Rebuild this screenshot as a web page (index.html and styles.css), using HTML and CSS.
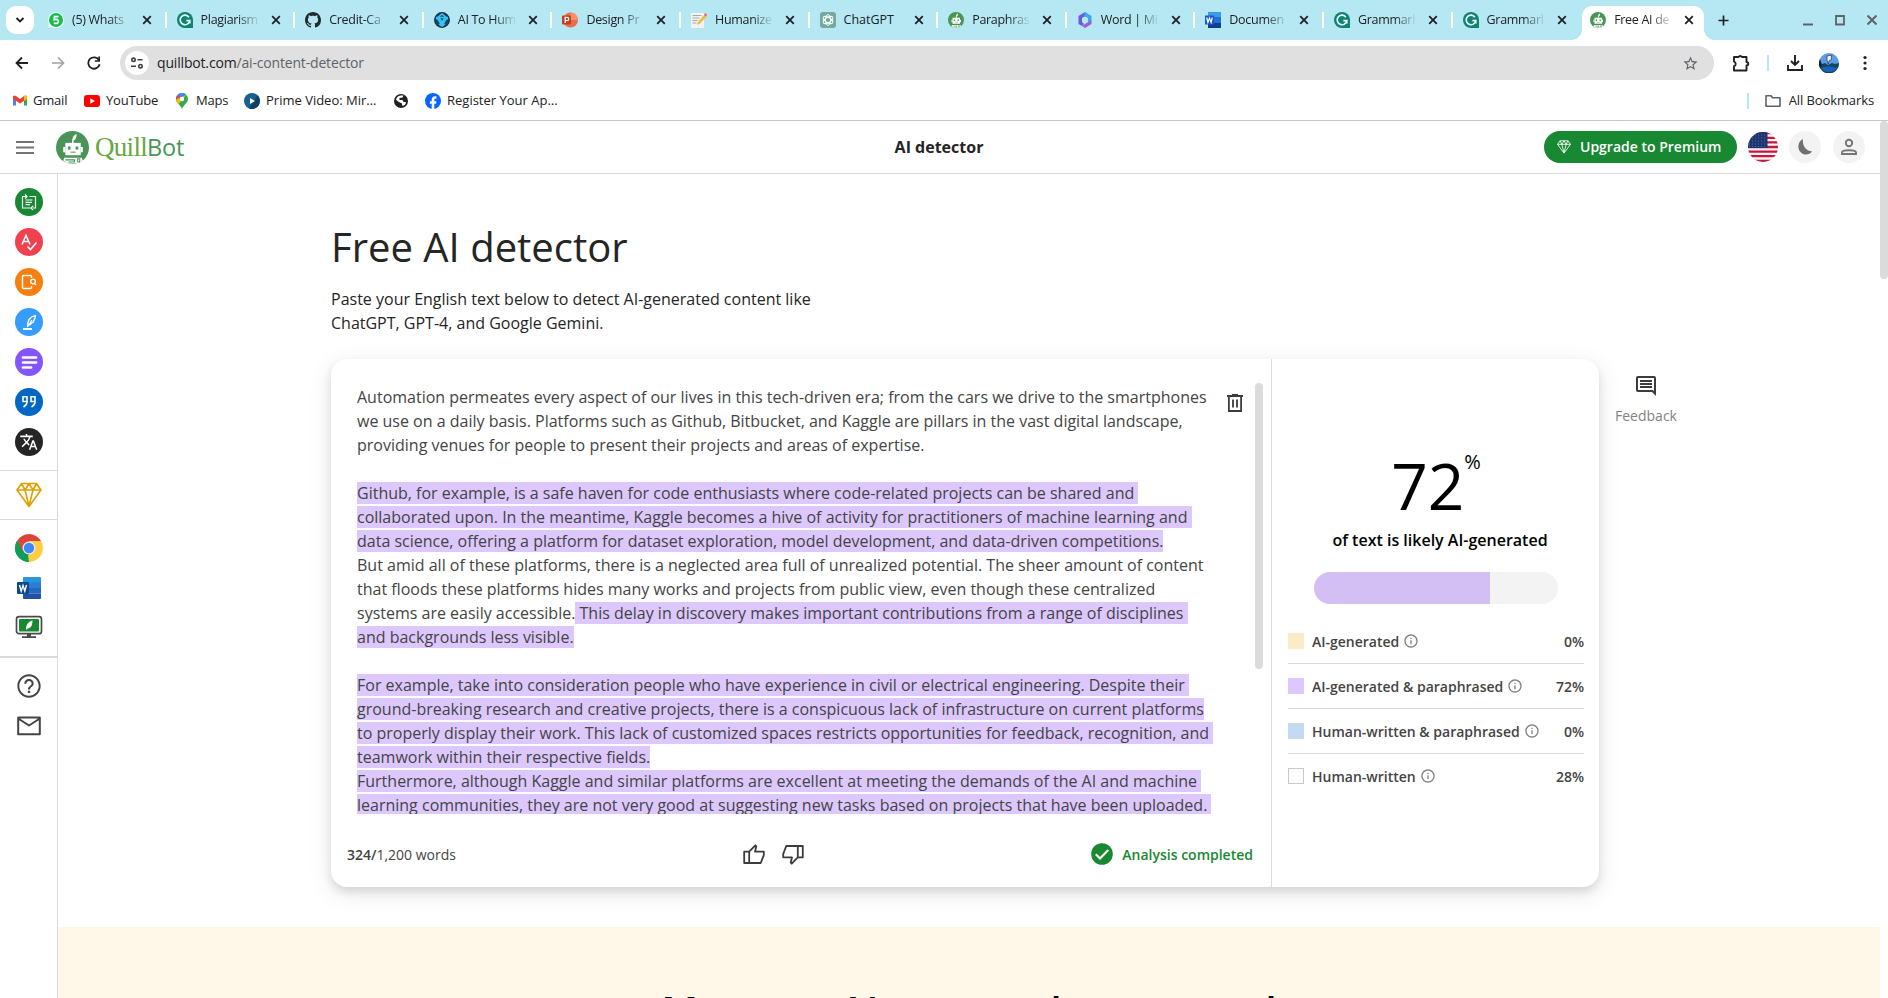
FILE: index.html
```
<!DOCTYPE html>
<html lang="en">
<head>
<meta charset="utf-8">
<title>Free AI detector</title>
<link rel="stylesheet" href="styles.css">
</head>
<body>
<svg class="defs" width="0" height="0">
  <defs>
    <symbol id="x" viewBox="0 0 10 10"><path d="M1.2 1.2l7.6 7.6M8.8 1.2L1.2 8.8" stroke="currentColor" stroke-width="1.8" fill="none"/></symbol>
    <symbol id="gram" viewBox="0 0 16 16"><path d="M8 0a8 8 0 0 1 8 8v8H8A8 8 0 0 1 8 0z" fill="#0a8571"/><path d="M12 5.2A4.8 4.8 0 1 0 12.8 8.6H9.4M12.8 8.6v3" fill="none" stroke="#fff" stroke-width="1.6"/></symbol>
    <symbol id="bot" viewBox="0 0 32 32"><circle cx="16" cy="16" r="16" fill="#499557"/><path d="M15.500 12c0-5 1.500-8 4.500-9 0 3-.5 5-3 6.500V12z" fill="#fff"/><path d="M9 11.500h15v12H9z" fill="#fff"/><path d="M7 15.500h2v5H7zM24 15.500h2v5h-2z" fill="#fff"/><rect x="11.500" y="15" width="2.600" height="3" fill="#499557"/><rect x="19" y="15" width="2.600" height="3" fill="#499557"/><path d="M14 20.500h5" stroke="#499557"/><path d="M8 26h17l1 2.500-4 3H11l-4-3z" fill="#fff"/><path d="M9 28h9v2h-6M21 27v3h2v-3z" fill="none" stroke="#499557"/></symbol>
    <symbol id="word" viewBox="0 0 24 22"><path d="M7 0h16a1 1 0 0 1 1 1v5H6V1a1 1 0 0 1 1-1z" fill="#2b95dc"/><path d="M6 5.500h18V11H6z" fill="#2b7cd3"/><path d="M6 11h18v5.500H6z" fill="#2866c6"/><path d="M6 16.500h18V21a1 1 0 0 1-1 1H7a1 1 0 0 1-1-1z" fill="#2150a5"/><rect y="5" width="12" height="12" rx="1" fill="#084a8f"/><path d="M2.500 8l1.700 6L6 8.500 7.800 14l1.700-6" fill="none" stroke="#fff" stroke-width="1.400"/></symbol>
    <symbol id="info" viewBox="0 0 24 24"><path fill="currentColor" d="M11 7h2v2h-2zm0 4h2v6h-2zm1-9C6.480 2 2 6.480 2 12s4.480 10 10 10 10-4.480 10-10S17.520 2 12 2zm0 18c-4.410 0-8-3.590-8-8s3.590-8 8-8 8 3.590 8 8-3.590 8-8 8z"/></symbol>
    <symbol id="gem" viewBox="0 0 26 26"><path d="M5.500 1.500h15L25 8 13 24.500 1 8zM1 8h24M5.500 1.500L9 8l4-6.500L17 8l3.500-6.500M9 8l4 16L17 8" fill="none" stroke="currentColor" stroke-width="1.600" stroke-linejoin="round"/></symbol>
    <symbol id="thumb" viewBox="0 0 22 20"><path d="M1.200 7.700h5V19h-5zM6.200 7.700L12.300 1.300l1 1-1.300 5.400h8.800v3.500L17.700 19H6.200" fill="none" stroke="currentColor" stroke-width="1.800" stroke-linejoin="round"/></symbol>
  </defs>
</svg>

<div class="tabs">
  <div class="tabsearch"><svg width="10" height="8" viewBox="0 0 10 8"><path d="M1.500 2L5 5.500 8.500 2" fill="none" stroke="#202124" stroke-width="1.900"/></svg></div>
  <div class="tab"><svg class="fav" viewBox="0 0 16 16"><path d="M0 16l1-4a8 8 0 1 1 3 3z" fill="#fff"/><circle cx="8" cy="8" r="7" fill="#14c04c"/><path d="M10.500 4.700H6.500l-.3 3c2-.8 4.400-.3 4.300 1.700s-2.800 2.600-4.600 1.500" fill="none" stroke="#fff" stroke-width="1.700"/></svg><span class="name">(5) Whats</span><svg class="close"><use href="#x"/></svg></div>
  <div class="tab"><svg class="fav"><use href="#gram"/></svg><span class="name">Plagiarism</span><svg class="close"><use href="#x"/></svg></div>
  <div class="tab"><svg class="fav" viewBox="0 0 16 16"><path fill="#24292f" d="M8 0C3.580 0 0 3.580 0 8c0 3.540 2.290 6.530 5.470 7.590.4.070.55-.17.55-.38 0-.19-.01-.82-.01-1.490-2.010.37-2.530-.49-2.690-.94-.09-.23-.48-.94-.82-1.130-.28-.15-.68-.52-.01-.53.63-.01 1.080.58 1.230.82.720 1.210 1.870.87 2.330.66.070-.52.28-.87.51-1.070-1.780-.2-3.640-.89-3.640-3.950 0-.87.31-1.590.82-2.150-.08-.2-.36-1.020.08-2.120 0 0 .67-.21 2.200.82.640-.18 1.320-.27 2-.27s1.360.09 2 .27c1.530-1.040 2.200-.82 2.200-.82.440 1.100.16 1.920.08 2.120.51.56.82 1.270.82 2.150 0 3.070-1.870 3.750-3.650 3.950.29.25.54.73.54 1.480 0 1.070-.01 1.930-.01 2.200 0 .21.15.46.55.38A8 8 0 0 0 16 8c0-4.420-3.580-8-8-8z"/></svg><span class="name">Credit-Ca</span><svg class="close"><use href="#x"/></svg></div>
  <div class="tab"><svg class="fav" viewBox="0 0 16 16"><circle cx="8" cy="8" r="7.300" fill="#174a70" stroke="#202b3c" stroke-width="1.300"/><path d="M3 5.500h10L8 13.500zM2 7l6-5 6 5M5 5.500l3 5 3-5M5 12l3 2 3-2" fill="none" stroke="#36c6f2" stroke-width="1.500"/></svg><span class="name">AI To Hum</span><svg class="close"><use href="#x"/></svg></div>
  <div class="tab"><svg class="fav" viewBox="0 0 16 16"><circle cx="8.500" cy="8" r="7.500" fill="#ed6c47"/><path d="M8.500.5a7.500 7.500 0 0 1 7.500 7.500H8.500z" fill="#ff8f6b"/><rect y="3.500" width="9" height="9" rx="1" fill="#c43e1c"/><path d="M3.200 11V5.300h1.900a1.600 1.600 0 0 1 0 3.300H3.200" fill="none" stroke="#fff" stroke-width="1.300"/></svg><span class="name">Design Pr</span><svg class="close"><use href="#x"/></svg></div>
  <div class="tab"><svg class="fav" viewBox="0 0 16 16"><path d="M0 1h13v15H0z" fill="#f3f3f3"/><path d="M1.500 3.500h9M1.500 6h7M1.500 8.500h5M1.500 11h4" stroke="#a7a7ad"/><path d="M6 13l1-3 7-8 2 2-7 7.500z" fill="#f6b73c"/><path d="M13 3l1.500-2L16 2.500 15 4.500z" fill="#df6f63"/></svg><span class="name">Humanize</span><svg class="close"><use href="#x"/></svg></div>
  <div class="tab"><svg class="fav" viewBox="0 0 16 16"><rect width="16" height="16" rx="3" fill="#74aa9c"/><g fill="none" stroke="#fff" stroke-width=".9"><ellipse cx="8" cy="8" rx="2.600" ry="5.400"/><ellipse cx="8" cy="8" rx="2.600" ry="5.400" transform="rotate(60 8 8)"/><ellipse cx="8" cy="8" rx="2.600" ry="5.400" transform="rotate(120 8 8)"/></g></svg><span class="name full">ChatGPT</span><svg class="close"><use href="#x"/></svg></div>
  <div class="tab"><svg class="fav"><use href="#bot"/></svg><span class="name">Paraphras</span><svg class="close"><use href="#x"/></svg></div>
  <div class="tab"><svg class="fav" viewBox="0 0 16 16"><path d="M8 0L1.500 4v8L5 14l2-2-2-2V6l5-3z" fill="#6b5bd6"/><path d="M8 0l6.500 4v5L11 10V6L7 4z" fill="#3ba8e8"/><path d="M5 14l3 2 6.500-4V8L8 12z" fill="#9b5fd8"/></svg><span class="name">Word | Mi</span><svg class="close"><use href="#x"/></svg></div>
  <div class="tab"><svg class="fav" viewBox="0 0 16 16"><path d="M3 0h13v5H3z" fill="#3a9de9"/><path d="M3 5h13v6H3z" fill="#2373d3"/><path d="M3 11h13v5H3z" fill="#103f91"/><path d="M0 3.500h9v9H0z" fill="#185abd"/><path d="M1.700 5.500l1.200 5 1.600-4.500 1.600 4.500 1.200-5" fill="none" stroke="#fff" stroke-width="1.200"/></svg><span class="name">Documen</span><svg class="close"><use href="#x"/></svg></div>
  <div class="tab"><svg class="fav"><use href="#gram"/></svg><span class="name">Grammarl</span><svg class="close"><use href="#x"/></svg></div>
  <div class="tab nosep"><svg class="fav"><use href="#gram"/></svg><span class="name">Grammarl</span><svg class="close"><use href="#x"/></svg></div>
  <div class="tab active"><svg class="fav"><use href="#bot"/></svg><span class="name">Free AI de</span><svg class="close"><use href="#x"/></svg></div>
  <svg class="plus" width="11" height="11" viewBox="0 0 11 11"><path d="M5.500.5v10M.5 5.500h10" stroke="#202124" stroke-width="1.700"/></svg>
  <div class="winctl">
    <svg width="12" height="12" viewBox="0 0 12 12"><path d="M1 10.500h10" stroke="currentColor" stroke-width="2"/></svg>
    <svg width="12" height="12" viewBox="0 0 12 12"><path d="M2 2h8v8.500H2z" fill="none" stroke="currentColor" stroke-width="1.800"/></svg>
    <svg width="12" height="12" viewBox="0 0 12 12"><path d="M1.500 1.500l9 9M10.500 1.500l-9 9" stroke="currentColor" stroke-width="2"/></svg>
  </div>
</div>

<div class="toolbar">
  <div class="nav">
    <svg width="14" height="14" viewBox="0 0 14 14"><path d="M13 7H2M7 1.500L1.500 7 7 12.500" fill="none" stroke="#202124" stroke-width="1.800"/></svg>
    <svg width="14" height="14" viewBox="0 0 14 14"><path d="M1 7h11M7 1.500L12.500 7 7 12.500" fill="none" stroke="#a3a3a3" stroke-width="1.700"/></svg>
    <svg width="14" height="14" viewBox="0 0 14 14"><path d="M12 4.200A5.700 5.700 0 1 0 12.600 8.200" fill="none" stroke="#202124" stroke-width="1.800"/><path d="M13 .5v5.300H7.800V4.300h3.500V.5z" fill="#202124"/></svg>
  </div>
  <div class="omni">
    <span class="site"><svg width="14" height="12" viewBox="0 0 14 12"><g fill="none" stroke="#3c4043" stroke-width="1.600"><circle cx="3.500" cy="2.800" r="1.700"/><path d="M7.500 2.800h5M1 9.200h5"/><circle cx="10.500" cy="9.200" r="1.700"/></g></svg></span>
    <span class="url">quillbot.com<span>/ai-content-detector</span></span>
    <svg class="star" width="17" height="17" viewBox="0 0 24 24"><path fill="#606367" d="M22 9.240l-7.190-.62L12 2 9.190 8.630 2 9.240l5.460 4.730L5.820 21 12 17.270 18.180 21l-1.630-7.030L22 9.240zM12 15.400l-3.760 2.270 1-4.280-3.320-2.880 4.380-.38L12 6.100l1.710 4.040 4.380.38-3.320 2.880 1 4.280L12 15.400z"/></svg>
  </div>
  <div class="tools">
    <svg width="18" height="18" viewBox="0 0 18 18"><path d="M2 3h4.500a2 2 0 0 1 3.500 0h4.500v5a1.500 1.500 0 0 1 0 3.500v5H2v-4.300a2.400 2.400 0 0 0 0-4.600z" fill="none" stroke="#202124" stroke-width="1.900" stroke-linejoin="round"/></svg>
    <i></i>
    <svg width="16" height="16" viewBox="0 0 16 16"><path d="M8 0v9.500M4 6l4 4 4-4M1 10v5h14v-5" fill="none" stroke="#202124" stroke-width="1.900"/></svg>
    <svg width="20" height="20" viewBox="0 0 20 20"><circle cx="10" cy="10" r="10" fill="#5c9be8"/><path d="M0 11l3 0 3-1 3 2 4-2 3 1 4-1a10 10 0 0 1-20 1z" fill="#0e4a58"/><path d="M2 15c4-2 12-2 16 0a10 10 0 0 1-16 0z" fill="#1c5fc0"/><path d="M1 6a10 10 0 0 0 0 9l2-3z" fill="#17202a"/><path d="M8 3l5-1-1 3 1 1-3 2-1 3-1-4z" fill="#eef3fa" stroke="#2a3140" stroke-width=".7"/></svg>
    <svg width="4" height="16" viewBox="0 0 4 16"><g fill="#202124"><circle cx="2" cy="2.500" r="1.600"/><circle cx="2" cy="8" r="1.600"/><circle cx="2" cy="13.500" r="1.600"/></g></svg>
  </div>
</div>

<div class="bookmarks">
  <div class="bm gmail"><svg width="14" height="11" viewBox="0 0 14 11"><path d="M0 1v9.500h3V4z" fill="#4285f4"/><path d="M14 1v9.500h-3V4z" fill="#34a853"/><path d="M0 1.500Q1 0 3 1l4 3 4-3q2-1 3 .5V4L7 8.500 0 4z" fill="#ea4335"/><path d="M11 1q2-1 3 .5V4l-3 2z" fill="#fbbc04"/></svg><span>Gmail</span></div>
  <div class="bm yt"><svg width="16" height="12" viewBox="0 0 16 12"><rect width="16" height="12" rx="3" fill="#f00"/><path d="M6.300 3.300v5.400L11 6z" fill="#fff"/></svg><span>YouTube</span></div>
  <div class="bm maps"><svg width="12" height="16" viewBox="0 0 12 16"><path d="M6 0a6 6 0 0 1 6 6c0 4-4 5-6 10C4 11 0 10 0 6a6 6 0 0 1 6-6z" fill="#34a853"/><path d="M1 9L9.500.9A6 6 0 0 0 1.300 2.300L0 6z" fill="#4285f4"/><path d="M1.300 2.300A6 6 0 0 0 0 6l5-1z" fill="#ea4335"/><path d="M0 6.500q.2 2 2.500 4.500L10 2 6 4z" fill="#fbbc04"/><circle cx="6" cy="6" r="2.200" fill="#fff"/></svg><span>Maps</span></div>
  <div class="bm prime"><svg width="16" height="16" viewBox="0 0 16 16"><circle cx="8" cy="8" r="8" fill="#185f92"/><path d="M13.600 2.300A8 8 0 0 1 5 15.400z" fill="#123f66"/><path d="M6 5v6l5-3z" fill="#fff"/></svg><span>Prime Video: Mir…</span></div>
  <div class="bm globe"><svg width="14" height="14" viewBox="0 0 14 14"><circle cx="7" cy="7" r="7" fill="#202124"/><path d="M6.500 1.500h3l-1 2-3 .5v2h3l1 2h2.500q0 2-2 3.500H8V9.500L4 7.500 2 5.500Q3 2 6.500 1.500z" fill="#fff"/></svg></div>
  <div class="bm fb"><svg width="16" height="16" viewBox="0 0 16 16"><circle cx="8" cy="8" r="8" fill="#0866ff"/><path d="M6.700 15.900v-5.200H4.900V8.200h1.800V7c0-2.600 1.400-3.700 3.300-3.700.8 0 1.200.1 1.500.2v2.200h-1c-.9 0-1.200.5-1.200 1.300v1.200h2.200l-.4 2.500H9.300v5.200z" fill="#fff"/></svg><span>Register Your Ap…</span></div>
  <div class="allbm"><i></i><svg width="16" height="14" viewBox="0 0 16 14"><path d="M1 1.800h5l1.500 2H15v8.500H1z" fill="none" stroke="#5f6368" stroke-width="1.600" stroke-linejoin="round"/></svg><span>All Bookmarks</span></div>
</div>

<div class="page">
  <div class="main">
    <header class="top">
      <svg class="burger" width="18" height="13" viewBox="0 0 18 13"><path d="M0 1h18M0 6.500h18M0 12h18" stroke="#757575" stroke-width="2"/></svg>
      <div class="brand"><svg width="33" height="33"><use href="#bot"/></svg><span class="logo"><span>Quill</span><b>Bot</b></span></div>
      <div class="title">AI detector</div>
      <div class="actions">
        <div class="upgrade"><svg width="14" height="14"><use href="#gem"/></svg><span>Upgrade to Premium</span></div>
        <svg class="flag" width="30" height="30" viewBox="0 0 30 30"><clipPath id="fc"><circle cx="15" cy="15" r="15"/></clipPath><g clip-path="url(#fc)"><path d="M0 0h30v30H0z" fill="#f5f3f4"/><path d="M0 1.200h30M0 5.800h30M0 10.400h30M0 15h30M0 19.600h30M0 24.200h30M0 28.800h30" stroke="#c8163c" stroke-width="2.300"/><path d="M0 0h19.500v16H0z" fill="#1e3570"/><path d="M1 3h18M1 6h18M1 9h18M1 12h18M1 14.500h18" stroke="#50669b" stroke-width="1" stroke-dasharray="1 2"/></g></svg>
        <span class="round"><svg width="20" height="20" viewBox="0 0 20 20"><path d="M8 2C2.500 4.500 1.800 12.500 6.500 16c3.500 2.600 8.500 1.700 10.500-1.800C11 14.200 7 8.500 8 2z" fill="#707070"/></svg></span>
        <span class="round"><svg width="24" height="24" viewBox="0 0 24 24"><g fill="none" stroke="#757575" stroke-width="1.900"><circle cx="12" cy="8" r="3.200"/><path d="M5 19v-1.500c0-3 14-3 14 0V19z"/></g></svg></span>
      </div>
    </header>
    <div class="body">
      <aside class="side">
        <div class="group tools7">
          <span class="dot green"><svg viewBox="0 0 28 28"><path d="M12 8.500H7.500V20h8.500M10 6.500l2 2-2 2M14.500 8.500h6V20h-2.500M18 22l-2-2 2-2" fill="none" stroke="#fff" stroke-width="1.200"/><path d="M10.500 12h7M10.500 14.300h6.500M10.500 16.600h4.500" stroke="#fff" stroke-width="1.200"/></svg></span>
          <span class="dot red"><svg viewBox="0 0 28 28"><path d="M7 16.500L11 7.500l4 9M8.300 13.500h5.500M12.500 18.500l3 3 6-7" fill="none" stroke="#fff" stroke-width="1.600"/></svg></span>
          <span class="dot orange"><svg viewBox="0 0 28 28"><path d="M16.500 10V8.500q0-1-1-1H8.500q-1 0-1 1v11q0 1 1 1h7q1 0 1-1V18" fill="none" stroke="#fff" stroke-width="1.400"/><circle cx="18" cy="13.500" r="2.300" fill="none" stroke="#fff" stroke-width="1.300"/><path d="M19.500 15.500l1.500 1.500" stroke="#fff" stroke-width="1.300"/></svg></span>
          <span class="dot blue"><svg viewBox="0 0 28 28"><path d="M12.500 18.500c0-6 3-10 8-10.800-.2 2-.7 3.500-1.700 4.600l-.3 1.500-1.500 1c-1.500 2-3 2.300-4 2.300M12.500 19l4.500-7" fill="none" stroke="#fff" stroke-width="1.300"/><path d="M8 21h9" stroke="#fff" stroke-width="1.900"/></svg></span>
          <span class="dot purple"><svg viewBox="0 0 28 28"><path d="M8 9.500h13M8 14.500h13M8 19.500h8" stroke="#fff" stroke-width="2.700" stroke-linecap="round"/></svg></span>
          <span class="dot navy"><svg viewBox="0 0 28 28"><path d="M12 13.500H8V8.700h4v5.500q0 2.500-3.500 4.800M20 13.500h-4V8.700h4v5.500q0 2.500-3.500 4.800" fill="none" stroke="#fff" stroke-width="1.600"/></svg></span>
          <span class="dot black"><svg viewBox="0 0 28 28"><g transform="translate(4.500 4.500) scale(.78)"><path fill="#fff" d="M12.870 15.070l-2.540-2.510.03-.03c1.740-1.940 2.980-4.170 3.710-6.530H17V4h-7V2H8v2H1v1.990h11.170C11.500 7.920 10.440 9.750 9 11.350 8.070 10.320 7.300 9.190 6.690 8h-2c.73 1.630 1.730 3.170 2.980 4.560l-5.090 5.020L4 19l5-5 3.110 3.110.76-2.040zM18.500 10h-2L12 22h2l1.120-3h4.750L21 22h2l-4.500-12zm-2.620 7l1.620-4.330L19.120 17h-3.240z"/></g></svg></span>
        </div>
        <div class="group gold"><svg width="26" height="26"><use href="#gem"/></svg></div>
        <div class="group apps">
          <svg width="28" height="28" viewBox="0 0 28 28"><path d="M14 14L1.900 7A14 14 0 0 1 26.100 7z" fill="#db4437"/><path d="M14 14L1.900 7A14 14 0 0 0 14 28z" fill="#0f9d58"/><path d="M14 28A14 14 0 0 0 26.100 7H14v7z" fill="#ffcd40"/><path d="M14 7h12.100q.5.800 0 0M1.900 7L8 17.500 14 14z" fill="#db4437"/><path d="M1.900 7L8 17.500l6 3.500 0 7A14 14 0 0 1 1.900 7z" fill="#0f9d58"/><path d="M20 17.500L14 28l-1-7z" fill="#ffcd40"/><circle cx="14" cy="14" r="6.500" fill="#e8e8ee"/><circle cx="14" cy="14" r="5.200" fill="#4285f4"/></svg>
          <svg width="24" height="22"><use href="#word"/></svg>
          <svg width="28" height="24" viewBox="0 0 28 24"><rect x="1.500" y="1.700" width="25" height="17" rx="2.500" fill="#fff" stroke="#4a4a4a" stroke-width="1.700"/><rect x="4" y="4" width="20" height="12.500" rx="1" fill="#188832"/><path d="M11 15c0-5 2-8.500 6.500-9.500 0 5-2 8-5 8z" fill="#fff"/><path d="M12 19h4v2.300h5V23H7v-1.700h5z" fill="#4a4a4a"/></svg>
        </div>
        <div class="group help">
          <svg width="28" height="28" viewBox="0 0 24 24"><path fill="#444" d="M11 18h2v-2h-2v2zm1-16C6.480 2 2 6.480 2 12s4.480 10 10 10 10-4.480 10-10S17.520 2 12 2zm0 18.300c-4.600 0-8.300-3.700-8.300-8.300s3.700-8.300 8.300-8.300 8.300 3.700 8.300 8.300-3.700 8.300-8.300 8.300zm0-14.300c-2.210 0-4 1.790-4 4h1.800c0-1.200 1-2.200 2.200-2.200s2.200 1 2.200 2.200c0 2-3.100 1.750-3.100 5h1.800c0-2.250 3.100-2.500 3.100-5 0-2.210-1.790-4-4-4z"/></svg>
          <svg width="24" height="20" viewBox="0 0 24 20"><path d="M1.200 1.500h21.600v16.700H1.200zM1.200 2.500L12 9.500l10.800-7" fill="none" stroke="#444" stroke-width="2" stroke-linejoin="round"/></svg>
        </div>
      </aside>
      <div class="content">
        <div class="hero">
          <h1>Free AI detector</h1>
          <p>Paste your English text below to detect AI-generated content like<br>ChatGPT, GPT-4, and Google Gemini.</p>
          <div class="row">
            <div class="card">
              <div class="editor">
                <div class="scroll">
                  <div class="text">Automation permeates every aspect of our lives in this tech-driven era; from the cars we drive to the smartphones<br>we use on a daily basis. Platforms such as Github, Bitbucket, and Kaggle are pillars in the vast digital landscape,<br>providing venues for people to present their projects and areas of expertise.<br><br><mark>Github, for example, is a safe haven for code enthusiasts where code-related projects can be shared and&nbsp;<br>collaborated upon. In the meantime, Kaggle becomes a hive of activity for practitioners of machine learning and&nbsp;<br>data science, offering a platform for dataset exploration, model development, and data-driven competitions.</mark><br>But amid all of these platforms, there is a neglected area full of unrealized potential. The sheer amount of content<br>that floods these platforms hides many works and projects from public view, even though these centralized<br>systems are easily accessible.<mark> This delay in discovery makes important contributions from a range of disciplines&nbsp;<br>and backgrounds less visible.</mark><br><br><mark>For example, take into consideration people who have experience in civil or electrical engineering. Despite their&nbsp;<br>ground-breaking research and creative projects, there is a conspicuous lack of infrastructure on current platforms<br>to properly display their work. This lack of customized spaces restricts opportunities for feedback, recognition, and&nbsp;<br>teamwork within their respective fields.</mark><br><mark>Furthermore, although Kaggle and similar platforms are excellent at meeting the demands of the AI and machine&nbsp;<br>learning communities, they are not very good at suggesting new tasks based on projects that have been uploaded.&nbsp;</mark></div>
                  <svg class="trash" width="16" height="18" viewBox="0 0 16 18"><path d="M0 2h16M5 1h6M1.900 2v15h12.200V2M6 5.500v8M10 5.500v8" fill="none" stroke="#3c3c3c" stroke-width="1.800"/></svg>
                  <div class="thumbbar"></div>
                </div>
                <div class="foot">
                  <div class="words"><b>324/</b>1,200 words</div>
                  <div class="votes"><svg width="22" height="20"><use href="#thumb"/></svg><svg class="down" width="22" height="20"><use href="#thumb"/></svg></div>
                  <div class="done"><svg width="22" height="22" viewBox="0 0 22 22"><circle cx="11" cy="11" r="10.800" fill="#188832"/><path d="M4.800 11.300l4.200 4.200 8.300-8.600" fill="none" stroke="#fff" stroke-width="2.200"/></svg><span>Analysis completed</span></div>
                </div>
              </div>
              <div class="result">
                <div class="score"><span>72</span><sup>%</sup></div>
                <div class="caption">of text is likely AI-generated</div>
                <div class="bar"><div style="width:72%"></div></div>
                <div class="legend">
                  <div class="li"><i class="sw ai"></i><span>AI-generated</span><svg><use href="#info"/></svg><b>0%</b></div>
                  <div class="li"><i class="sw aip"></i><span>AI-generated &amp; paraphrased</span><svg><use href="#info"/></svg><b>72%</b></div>
                  <div class="li"><i class="sw hp"></i><span>Human-written &amp; paraphrased</span><svg><use href="#info"/></svg><b>0%</b></div>
                  <div class="li"><i class="sw hw"></i><span>Human-written</span><svg><use href="#info"/></svg><b>28%</b></div>
                </div>
              </div>
            </div>
            <div class="feedback"><svg width="24" height="24" viewBox="0 0 24 24"><path fill="#3c3c3c" d="M21.990 4c0-1.100-.89-2-1.990-2H4c-1.100 0-2 .9-2 2v12c0 1.100.9 2 2 2h14l4 4-.01-18zM20 4v13.170L18.830 16H4V4h16zM6 12h12v2H6zm0-3h12v2H6zm0-3h12v2H6z"/></svg><span>Feedback</span></div>
          </div>
        </div>
        <section class="promo"><h2>Meet our AI-powered<span> essay tool</span></h2></section>
      </div>
    </div>
  </div>
  <div class="pagebar"><div></div></div>
</div>
</body>
</html>
```

FILE: styles.css
```
* { box-sizing: border-box; }
html, body { margin: 0; height: 998px; overflow: hidden; }
body { background: #fff; font-family: "Open Sans", "Noto Sans", sans-serif; color: #252525; display: flex; flex-direction: column; }
svg { display: block; flex: none; }
.defs { position: absolute; }
i { display: block; flex: none; }

/* browser chrome */
.tabs { flex: none; height: 40px; background: #b5e8f3; display: flex; align-items: center; font-size: 12.500px; color: #202124; padding-left: 6px; }
.tabsearch { width: 28px; height: 28px; border-radius: 10px; background: #fff; display: flex; align-items: center; justify-content: center; margin-right: 6px; }
.tab { flex: none; width: 126.6px; height: 16px; display: flex; align-items: center; padding-left: 8px; border-right: 2px solid #fff; margin-right: 2px; }
.tab.nosep { border-color: transparent; }
.fav { width: 16px; height: 16px; }
.name { width: 60px; margin-left: 8px; white-space: nowrap; line-height: 20px; letter-spacing: -.3px; -webkit-mask-image: linear-gradient(90deg, #000 60%, transparent 98%); mask-image: linear-gradient(90deg, #000 60%, transparent 98%); }
.name.full { -webkit-mask-image: none; mask-image: none; letter-spacing: 0; }
.close { width: 10px; height: 10px; margin-left: 10px; }
.active { position: relative; width: 122px; height: 34px; align-self: flex-end; margin-left: -1px; padding-bottom: 6px; margin-right: 0; background: #fff; border: 0; border-radius: 10px 10px 0 0; }
.active::before, .active::after { content: ""; position: absolute; bottom: 0; width: 10px; height: 10px; }
.active::before { left: -10px; background: radial-gradient(circle at 0 0, #b5e8f3 9.5px, #fff 10px); }
.active::after { right: -10px; background: radial-gradient(circle at 100% 0, #b5e8f3 9.500px, #fff 10px); }
.plus { margin-left: 14px; }
.winctl { margin-left: auto; display: flex; gap: 20px; padding-right: 10px; color: #5f6368; }
.toolbar { flex: none; height: 46px; display: flex; align-items: center; padding-left: 15px; }
.nav { display: flex; gap: 22px; width: 105px; }
.omni { width: 1594px; height: 34px; border-radius: 17px; background: #e0e0e0; display: flex; align-items: center; padding: 0 15px 0 5px; }
.site { width: 24px; height: 24px; border-radius: 50%; background: #fff; display: flex; align-items: center; justify-content: center; }
.url { font-size: 14px; margin-left: 8px; padding-bottom: 2px; color: #202124; letter-spacing: -.17px; }
.url span { color: #606367; }
.star { margin-left: auto; }
.tools { display: flex; align-items: center; margin-left: 18px; }
.tools i, .allbm i { width: 2px; height: 16px; background: #b5e8f3; }
.tools i { margin: 0 18px 0 17px; }
.tools svg:nth-of-type(3) { margin: 0 24px 0 16px; }
.bookmarks { flex: none; height: 35px; border-bottom: 1px solid #c8c8c8; padding: 0 14px 5px 13px; display: flex; align-items: center; font-size: 13px; color: #202124; white-space: nowrap; }
.bookmarks span { padding-bottom: 2px; }
.bm { display: flex; align-items: center; gap: 6px; flex: none; height: 28px; }
.gmail { width: 71px; letter-spacing: -.2px; }
.yt { width: 92px; letter-spacing: -.2px; }
.maps { width: 68px; gap: 8px; letter-spacing: -.2px; }
.prime { width: 150px; }
.globe { width: 31px; }
.allbm { margin-left: auto; display: flex; align-items: center; letter-spacing: -.1px; }
.allbm svg { margin: 0 8px 0 16px; }

/* site */
.page { flex: 1; display: flex; min-height: 0; }
.main { flex: 1; display: flex; flex-direction: column; min-width: 0; }
.pagebar { width: 8px; }
.pagebar div { height: 158px; border-radius: 4px; background: #dbdbdb; }
.top { flex: none; height: 53px; border-bottom: 1px solid #dadada; display: grid; grid-template-columns: 40px 1fr auto 1fr; align-items: center; padding: 0 15px 0 16px; }
.brand { display: flex; align-items: center; gap: 6px; }
.logo { font-size: 23.500px; line-height: 30px; color: #67a83f; display: flex; }
.logo span { font-family: "Liberation Serif", serif; font-size: 27px; letter-spacing: -.7px; }
.logo b { font-weight: 400; color: #499557; letter-spacing: -.2px; }
.title { font-size: 16px; font-weight: 700; margin-right: 43px; }
.actions { display: flex; align-items: center; justify-content: flex-end; }
.upgrade { width: 193px; height: 32px; border-radius: 16px; background: #188832; color: #fff; display: flex; align-items: center; padding-left: 13px; gap: 9px; font-size: 14px; font-weight: 600; letter-spacing: 0; white-space: nowrap; }
.upgrade span { padding-bottom: 1px; }
.flag { margin: 0 11px; }
.round { width: 32px; height: 32px; border-radius: 50%; background: #f3f3f3; display: flex; align-items: center; justify-content: center; }
.round + .round { margin-left: 12px; }
.body { flex: 1; display: flex; min-height: 0; }
.side { flex: none; width: 58px; border-right: 1px solid #dbdbdb; }
.group { display: flex; flex-direction: column; align-items: center; }
.tools7 { height: 297px; padding-top: 14px; gap: 12px; border-bottom: 1px solid #dbdbdb; }
.dot { width: 28px; height: 28px; border-radius: 50%; }
.green { background: #188832; }
.red { background: #f0414f; }
.orange { background: #f57f10; }
.blue { background: #349dff; }
.purple { background: #8355ff; }
.navy { background: #0067c5; }
.black { background: #252525; }
.gold { height: 49px; padding-top: 11px; color: #e0a100; border-bottom: 1px solid #dbdbdb; }
.apps { height: 138px; padding-top: 14px; border-bottom: 2px solid #dbdbdb; }
.apps svg:nth-child(2) { margin: 15px 0 16px; }
.help { padding-top: 14px; gap: 16px; }
.content { flex: 1; min-width: 0; overflow: hidden; }
.hero { height: 753px; padding: 45px 0 0 273px; }
h1 { margin: 0; font-size: 40px; line-height: 56px; font-weight: 400; }
p { margin: 12px 0 0; font-size: 16px; line-height: 24px; }
.row { display: flex; margin-top: 24px; }
.card { width: 1268px; height: 528px; border-radius: 16px; display: flex; background: #fff; box-shadow: 0 5px 8px rgba(0,0,0,.1), 0 6px 24px rgba(0,0,0,.1); }
.editor { width: 941px; border-right: 1px solid #dbdbdb; padding-top: 24px; }
.scroll { display: flex; height: 431px; overflow: hidden; padding-left: 26px; }
.text { width: 870px; font-size: 16px; line-height: 24px; white-space: nowrap; color: #444; padding-top: 2px; }
mark { background: #dcc8fd; color: inherit; }
.trash { margin-top: 11px; }
.thumbbar { width: 8px; height: 286px; margin-left: 12px; border-radius: 4px; background: #dbdbdb; }
.foot { display: grid; grid-template-columns: 1fr auto 1fr; height: 72px; margin-top: 5px; align-items: center; padding: 2px 18px 4px 16px; font-size: 14px; }
.words { color: #444; }
.words b { font-weight: 600; }
.votes { display: flex; gap: 17px; color: #3c3c3c; margin-right: 53px; }
.down { transform: rotate(180deg); margin-top: 1px; }
.done { display: flex; align-items: center; justify-content: flex-end; gap: 9px; color: #188832; font-weight: 600; }
.result { flex: 1; padding: 95px 15px 0 16px; color: #000; }
.score { display: flex; justify-content: center; height: 74px; }
.score span { font-size: 64px; line-height: 64px; }
.score sup { font-size: 20px; line-height: 20px; margin-top: -2px; }
.caption { font-size: 16px; line-height: 24px; font-weight: 600; text-align: center; padding-left: 8px; }
.bar { width: 244px; height: 32px; margin: 20px 0 0 26px; border-radius: 16px; background: #f3f3f3; overflow: hidden; }
.bar div { height: 100%; background: #d4bff5; }
.legend { margin-top: 15px; }
.li { height: 45px; border-bottom: 1px solid #dbdbdb; display: flex; align-items: center; font-size: 14px; font-weight: 600; color: #444; white-space: nowrap; }
.li:last-child { border-color: transparent; }
.li svg { width: 16px; height: 16px; margin-left: 4px; color: #828282; }
.li b { margin-left: auto; font-weight: 600; }
.sw { width: 16px; height: 16px; margin-right: 8px; }
.ai { background: #fdebc8; }
.aip { background: #dcc8fd; }
.hp { background: #c4daf1; }
.hw { border: 1px solid #c8c8c8; }
.feedback { margin-left: 15px; padding-top: 15px; width: 64px; display: flex; flex-direction: column; align-items: center; font-size: 14px; line-height: 20px; color: #828282; }
.feedback span { margin-top: 8px; }
.promo { background: #fff7e7; height: 200px; padding-top: 56px; text-align: center; color: #000; }
h2 { margin: 0; font-size: 40px; line-height: 56px; font-weight: 600; word-spacing: -4px; }
h2 span { word-spacing: 6px; }
```
